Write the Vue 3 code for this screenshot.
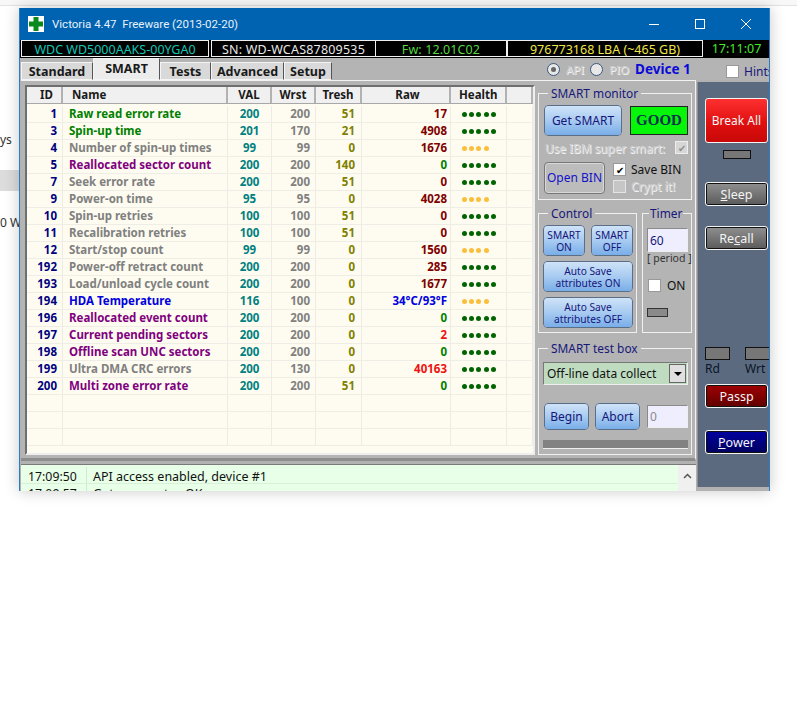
<script setup>
const rows = [
  [1,'Raw read error rate','g',200,200,51,'17','m',1],
  [3,'Spin-up time','g',201,170,21,'4908','m',1],
  [4,'Number of spin-up times','x',99,99,0,'1676','m',0],
  [5,'Reallocated sector count','p',200,200,140,'0','g',1],
  [7,'Seek error rate','x',200,200,51,'0','m',1],
  [9,'Power-on time','x',95,95,0,'4028','m',0],
  [10,'Spin-up retries','x',100,100,51,'0','m',1],
  [11,'Recalibration retries','x',100,100,51,'0','m',1],
  [12,'Start/stop count','x',99,99,0,'1560','m',0],
  [192,'Power-off retract count','x',200,200,0,'285','m',1],
  [193,'Load/unload cycle count','x',200,200,0,'1677','m',1],
  [194,'HDA Temperature','b',116,100,0,'34°C/93°F','b',0],
  [196,'Reallocated event count','p',200,200,0,'0','g',1],
  [197,'Current pending sectors','p',200,200,0,'2','r',1],
  [198,'Offline scan UNC sectors','p',200,200,0,'0','g',1],
  [199,'Ultra DMA CRC errors','x',200,130,0,'40163','r',1],
  [200,'Multi zone error rate','p',200,200,51,'0','g',1]
]
const blanks = [1,2,3]
</script>

<template>
  <div class="desk">
    <div class="topstrip"></div>
    <div class="behind">
      <span class="b1">ys</span>
      <span class="b2"></span>
      <span class="b3">0 W</span>
    </div>
    <div class="win">
      <div class="title">
        <svg class="logo" width="16" height="16" viewBox="0 0 16 16"><rect width="16" height="16" fill="#fff"/><path d="M5.500 1h5v4.500h4.500v5h-4.500v4.500h-5v-4.500h-4.500v-5h4.500z" fill="#0a8a1e"/></svg>
        <span class="ttext">Victoria 4.47&nbsp; Freeware (2013-02-20)</span>
        <div class="caps">
          <svg width="12" height="12" viewBox="0 0 12 12"><path d="M1 6.500h10" stroke="#fff" fill="none"/></svg>
          <svg width="12" height="12" viewBox="0 0 12 12"><rect x="1.500" y="1.500" width="9" height="9" stroke="#fff" fill="none"/></svg>
          <svg width="12" height="12" viewBox="0 0 12 12"><path d="M1 1l10 10M11 1l-10 10" stroke="#fff" fill="none"/></svg>
        </div>
      </div>
      <div class="info">
        <div class="cell c1">WDC WD5000AAKS-00YGA0</div>
        <div class="cell c2">SN: WD-WCAS87809535</div>
        <div class="cell c3">Fw: 12.01C02</div>
        <div class="cell c4">976773168 LBA (~465 GB)</div>
        <div class="clock">17:11:07</div>
      </div>
      <div class="tabrow">
        <div class="tabs">
          <span class="tab t1">Standard</span>
          <span class="tab on">SMART</span>
          <span class="tab t3">Tests</span>
          <span class="tab t4">Advanced</span>
          <span class="tab t5">Setup</span>
        </div>
        <div class="apirow">
          <span class="radio sel"></span><span class="dis api">API</span>
          <span class="radio"></span><span class="dis pio">PIO</span>
          <span class="dev">Device 1</span>
        </div>
        <div class="hints"><span class="box white"></span><span>Hints</span></div>
      </div>
      <div class="work">
        <div class="main">
          <div class="panel">
            <div class="grid">
              <div class="row head">
                <span class="id">ID</span><span class="name">Name</span><span class="num">VAL</span><span class="num">Wrst</span><span class="num">Tresh</span><span class="raw">Raw</span><span class="health">Health</span><span class="rest"></span>
              </div>
              <div v-for="r in rows" :key="r[0]" class="row">
                <span class="id">{{ r[0] }}</span>
                <span class="name" :class="r[2]">{{ r[1] }}</span>
                <span class="num val">{{ r[3] }}</span>
                <span class="num wrst">{{ r[4] }}</span>
                <span class="num tresh">{{ r[5] }}</span>
                <span class="raw" :class="r[7]">{{ r[6] }}</span>
                <span class="health dots" :class="r[8] ? 'hg' : 'hy'"><i v-for="d in (r[8] ? 5 : 4)" :key="d"></i></span>
                <span class="rest"></span>
              </div>
              <div v-for="b in blanks" :key="b" class="row">
                <span class="id"></span><span class="name"></span><span class="num"></span><span class="num"></span><span class="num"></span><span class="raw"></span><span class="health"></span><span class="rest"></span>
              </div>
            </div>
            <div class="side">
              <fieldset class="grp mon">
                <legend>SMART monitor</legend>
                <div class="mrow">
                  <button class="btn blue gs">Get SMART</button>
                  <div class="good">GOOD</div>
                </div>
                <div class="ibm"><span class="dis">Use IBM super smart:</span><span class="box chkdis">✔</span></div>
                <div class="mrow2">
                  <button class="btn grey ob">Open BIN</button>
                  <div class="checks">
                    <div class="ck"><span class="box white">✔</span>Save BIN</div>
                    <div class="ck"><span class="box off"></span><span class="dis">Crypt it!</span></div>
                  </div>
                </div>
              </fieldset>
              <div class="pair">
                <fieldset class="grp ctl">
                  <legend>Control</legend>
                  <div class="two">
                    <button class="btn blue sm">SMART<br>ON</button>
                    <button class="btn blue sm">SMART<br>OFF</button>
                  </div>
                  <button class="btn blue wide">Auto Save<br>attributes ON</button>
                  <button class="btn blue wide">Auto Save<br>attributes OFF</button>
                </fieldset>
                <fieldset class="grp tim">
                  <legend>Timer</legend>
                  <div class="input t60">60</div>
                  <div class="period">[ period ]</div>
                  <div class="onrow"><span class="box white"></span>ON</div>
                  <div class="led"></div>
                </fieldset>
              </div>
              <fieldset class="grp test">
                <legend>SMART test box</legend>
                <div class="combo"><span>Off-line data collect</span><i><b></b></i></div>
                <div class="trow">
                  <button class="btn blue tb">Begin</button>
                  <button class="btn blue tb ab">Abort</button>
                  <div class="input zero">0</div>
                </div>
                <div class="prog"></div>
              </fieldset>
            </div>
          </div>
          <div class="log">
            <div class="lines">
              <div class="line"><span class="lt">17:09:50</span><span>API access enabled, device #1</span></div>
              <div class="line l2"><span class="lt">17:09:57</span><span>Get passport ... OK</span></div>
            </div>
            <div class="sb"><svg width="9" height="6" viewBox="0 0 9 6"><path d="M1 5l3.500-3.500 3.500 3.500" stroke="#555" stroke-width="1.500" fill="none"/></svg></div>
          </div>
        </div>
        <div class="rail">
          <button class="rbtn red">Break All</button>
          <div class="rled"></div>
          <button class="rbtn dark sl"><u>S</u>leep</button>
          <button class="rbtn dark rc">Re<u>c</u>all</button>
          <div class="rw">
            <div class="rwc"><i></i><span>Rd</span></div>
            <div class="rwc"><i></i><span>Wrt</span></div>
          </div>
          <button class="rbtn pass">Passp</button>
          <button class="rbtn pow"><u>P</u>ower</button>
        </div>
      </div>
    </div>
  </div>
</template>

<style>
html, body { margin: 0; background: #fff; }
</style>

<style scoped>
.desk { position: relative; width: 797px; height: 707px; overflow: hidden; background: #fff; font-family: "Noto Sans", "Open Sans", sans-serif; font-size: 12px; color: #111; }
.topstrip { height: 5px; background: #f8f8f8; border-bottom: 1px solid #e2e2e2; }
.behind { position: absolute; left: 0; top: 0; width: 19px; height: 300px; font-size: 12px; color: #333; }
.b1 { position: absolute; left: 0; top: 131px; }
.b2 { position: absolute; left: 0; top: 170px; width: 19px; height: 21px; background: #dcdcdc; }
.b3 { position: absolute; left: 0; top: 214px; white-space: nowrap; }
.win { position: absolute; left: 19px; top: 8px; width: 751px; height: 483px; box-sizing: border-box; border-left: 1px solid #2b7cc4; border-right: 1px solid #2b7cc4; overflow: hidden; background: #b2b2b2; display: flex; flex-direction: column; box-shadow: 0 0 14px rgba(0,0,0,.22); }
.title { height: 32px; flex: none; background: #0063b1; color: #e8f1fa; display: flex; align-items: center; padding: 0 0 0 8px; font-family: Roboto, sans-serif; font-size: 11.500px; }
.logo { margin-right: 8px; }
.caps { margin-left: auto; display: flex; gap: 34px; padding-right: 17px; }
.info { height: 18px; flex: none; background: #000; display: flex; align-items: stretch; font-size: 12.500px; padding-left: 1px; }
.cell { border: 1px solid #f0f0f0; display: flex; align-items: center; justify-content: center; box-sizing: border-box; height: 17px; padding-top: 1px; flex: none; }
.c1 { width: 188px; color: #12c6b4; margin-right: 2px; }
.c2 { width: 165px; color: #e8e8e8; letter-spacing: .2px; }
.c3 { width: 131px; color: #56d840; border-left: 0; letter-spacing: .1px; }
.c4 { width: 196px; color: #f1e649; }
.clock { width: 67px; flex: none; color: #46e82e; text-align: center; line-height: 18px; }
.tabrow { height: 22px; flex: none; display: flex; align-items: flex-start; position: relative; background: #b4b4b4; }
.tabs { display: flex; align-items: flex-end; height: 22px; padding-left: 1px; font-weight: 700; font-size: 12.500px; }
.tab { box-sizing: border-box; height: 18px; background: #d9d9d9; border: 1px solid #f4f4f4; border-right-color: #555; display: flex; align-items: center; justify-content: center; color: #1a1a1a; }
.t1 { width: 72px; }
.tab.on { width: 67px; height: 22px; background: #ececec; padding-bottom: 2px; position: relative; }
.t3 { width: 51px; }
.t4 { width: 73px; }
.t5 { width: 48px; }
.apirow { position: absolute; left: 527px; top: 3px; display: flex; align-items: center; height: 16px; }
.radio { width: 13px; height: 13px; border-radius: 50%; box-sizing: border-box; background: #e8e8e8; border: 1px solid #39577f; position: relative; }
.radio.sel::after { content: ""; position: absolute; left: 3px; top: 3px; width: 5px; height: 5px; border-radius: 50%; background: #666; }
.dis { color: #cfcfcf; text-shadow: 1px 1px 0 #f2f2f2; }
.api { margin: 0 6px 0 6px; font-size: 11.500px; }
.pio { margin: 0 6px 0 6px; font-size: 11.500px; }
.dev { color: #0b0bd8; font-weight: 700; font-size: 13.500px; }
.hints { position: absolute; left: 706px; top: 5px; display: flex; align-items: center; gap: 5px; color: #17177a; white-space: nowrap; }
.box { width: 13px; height: 13px; box-sizing: border-box; display: inline-flex; align-items: center; justify-content: center; font-size: 10px; line-height: 1; flex: none; border: 1px solid #999; }
.box.white { background: #fff; color: #000; }
.box.off { background: #c6c6c6; border-color: #e4e4e4; }
.chkdis { background: #d6d6d6; color: #909090; border-color: #eee; margin-left: auto; }
.work { flex: 1; min-height: 0; display: flex; }
.main { width: 677px; flex: none; display: flex; flex-direction: column; padding-left: 1px; box-sizing: border-box; }
.panel { height: 381px; flex: none; box-sizing: border-box; display: flex; padding: 4px 0 0 4px; border-top: 1px solid #f2f2f2; border-right: 1px solid #f2f2f2; margin-right: 1px; border-bottom: 3px solid #8d8d8d; gap: 3px; background: #b4b4b4; }
.grid { width: 510px; height: 370px; overflow: hidden; flex: none; box-sizing: border-box; border: 2px solid #6f6f6f; border-right-color: #eee; border-bottom-color: #eee; background: #fefcf0; font-weight: 700; font-size: 11.500px; }
.row { display: grid; grid-template-columns: 36px 165px 44px 44px 46px 89px 56px 1fr; height: 17px; border-bottom: 1px solid #eeeee6; line-height: 16px; box-sizing: border-box; }
.row > span { border-right: 1px solid #ecece4; box-sizing: border-box; white-space: nowrap; overflow: hidden; }
.row.head { height: 17px; margin-bottom: 2px; background: #f0f0f0; color: #1a1a1a; border-bottom: 1px solid #a8a8a8; line-height: 16px; }
.row.head > span { border-right: 2px solid #b2b2b2; }
.row.head .num { text-align: center; padding: 0; }
.row.head .id { text-align: center; padding: 0 0 0 5px; color: #1a1a1a; }
.row.head .name { padding-left: 9px; color: #1a1a1a; }
.row.head .raw { text-align: center; padding: 0 0 0 4px; }
.row.head .health { text-align: left; padding: 0 0 0 8px; color: #1a1a1a; }
.id { text-align: right; padding-right: 5px; color: #000080; }
.name { padding-left: 6px; }
.num { text-align: right; padding-right: 5px; }
.num.val { color: #008080; text-align: center; padding: 0; }
.wrst { color: #808080; }
.tresh { color: #808000; padding-right: 6px; }
.raw { text-align: right; padding-right: 3px; }
.m { color: #800000; }
.g { color: #008000; }
.x { color: #808080; }
.p { color: #800080; }
.b { color: #0000e0; }
.r { color: #f01010; }
.health { padding-left: 11px; }
.dots { display: flex; align-items: center; gap: 2.200px; }
.dots i { width: 5px; height: 5px; border-radius: 50%; background: currentColor; display: block; flex: none; }
.hg { color: #006400; }
.hy { color: #fbbf3c; }
.side { width: 154px; flex: none; display: flex; flex-direction: column; }
.grp { margin: 0; padding: 0 3px 0 5px; box-sizing: border-box; border: 1px solid #f0f0f0; min-width: 0; }
.grp legend { color: #17177a; font-size: 11.900px; padding: 0 3px; margin-left: 5px; line-height: 16px; }
.mon legend { margin-left: 4px; }
.mon { height: 115px; flex: none; }
.btn { font-family: inherit; font-size: 12px; border-radius: 4px; padding: 0; box-sizing: border-box; cursor: default; line-height: 12px; }
.blue { background: linear-gradient(#cfe3f8, #a8cbf1 50%, #79aee8); border: 1px solid #f0f6ff; outline: 1px solid #5a6e88; outline-offset: -1px; color: #15157a; }
.grey { background: #bcbcbc; border: 1px solid #777; color: #1212c8; box-shadow: inset 0 0 0 1px #d8d8d8; }
.mrow { display: flex; justify-content: space-between; align-items: flex-start; margin-top: 4px; height: 32px; }
.gs { width: 78px; height: 31px; }
.good { width: 58px; height: 29px; margin-top: 1px; box-sizing: border-box; border: 1px solid #222; background: #06f509; color: #0a3050; font-family: "Liberation Serif", serif; font-weight: 700; font-size: 15px; display: flex; align-items: center; justify-content: center; }
.ibm { display: flex; align-items: center; margin-top: 3px; height: 15px; white-space: nowrap; font-size: 11.800px; padding-left: 1px; }
.mrow2 { display: flex; align-items: center; gap: 8px; margin-top: 7px; }
.ob { width: 61px; height: 32px; }
.checks { display: flex; flex-direction: column; gap: 3px; }
.ck { display: flex; align-items: center; gap: 5px; height: 14px; }
.pair { display: flex; justify-content: space-between; height: 133px; flex: none; }
.ctl { width: 99px; height: 128px; margin-top: 5px; padding: 0 3px 0 4px; display: flex; flex-direction: column; gap: 5px; }
.tim { width: 50px; height: 128px; margin-top: 5px; padding: 0 2px 0 4px; }
.grp.tim legend { margin-left: 2px; padding: 0 1px; }
.two { display: flex; justify-content: space-between; margin-top: 4px; }
.sm { width: 42px; height: 31px; font-size: 10.200px; }
.wide { width: 90px; height: 31px; font-size: 10.200px; }
.input { background: #eeeeff; border: 1px solid #8a8a8a; border-right-color: #eee; border-bottom-color: #eee; box-sizing: border-box; color: #15157a; padding-left: 2px; display: flex; align-items: center; }
.t60 { width: 41px; height: 24px; margin-top: 7px; }
.period { color: #333; font-size: 10.500px; line-height: 13px; white-space: nowrap; }
.onrow { display: flex; align-items: center; gap: 6px; margin-top: 13px; height: 14px; padding-left: 1px; color: #111; }
.led { width: 21px; height: 9px; background: #8a8a8a; border: 1px solid #333; margin-top: 16px; box-sizing: border-box; }
.test { height: 115px; flex: none; margin-top: 7px; padding: 0 3px 0 4px; }
.combo { height: 23px; margin-top: 6px; background: #bfdcc1; border: 1px solid #777; border-right-color: #eee; border-bottom-color: #eee; box-sizing: border-box; display: flex; align-items: center; padding: 0 1px 0 3px; white-space: nowrap; justify-content: space-between; }
.combo i { width: 17px; height: 19px; background: #e0e0e0; border: 1px solid #666; box-sizing: border-box; display: flex; align-items: center; justify-content: center; }
.combo b { width: 0; height: 0; border: 4px solid transparent; border-top: 4px solid #000; border-bottom: 0; }
.trow { display: flex; align-items: center; margin: 18px 0 0 1px; gap: 6px; height: 27px; }
.tb { width: 45px; height: 27px; }
.ab { margin-right: 1px; }
.zero { width: 41px; height: 23px; color: #8a8a8a; }
.prog { height: 9px; margin-top: 10px; background: #828282; border-bottom: 1px solid #eee; box-sizing: border-box; }
.log { flex: 1; min-height: 0; display: flex; margin: 3px 1px 0 0; background: #e8ffe8; overflow: hidden; border-top: 1px solid #7a7a7a; }
.lines { flex: 1; padding-top: 2px; }
.line { height: 17px; display: flex; border-bottom: 1px solid #d8efd8; line-height: 20px; box-sizing: border-box; font-size: 12.500px; }
.lt { width: 66px; padding-left: 7px; box-sizing: border-box; border-right: 1px solid #d0e8d0; margin-right: 6px; font-size: 12.300px; }
.sb { width: 18px; background: #f0f0f0; display: flex; justify-content: center; padding-top: 8px; box-sizing: border-box; }
.rail { flex: 1; background: #5b6a7e; margin: 2px 0 4px; display: flex; flex-direction: column; align-items: stretch; padding: 16px 0 0 7px; border-left: 1px solid #8f8f8f; box-sizing: border-box; }
.rbtn { height: 24px; font-family: inherit; font-size: 12.500px; border-radius: 3px; border: 1px solid #f4f4f4; color: #f4f4f4; padding: 0; box-sizing: border-box; box-shadow: 0 0 0 1px #111 inset; width: 63px; flex: none; }
.red { height: 45px; background: linear-gradient(#ff3030, #e01010 55%, #c80808); font-size: 12px; box-shadow: none; }
.rled { width: 28px; height: 9px; background: #777; border: 1px solid #111; margin: 7px 0 0 18px; box-sizing: border-box; flex: none; }
.dark { background: linear-gradient(#909090, #5a5a5a); }
.sl { margin-top: 23px; }
.rc { margin-top: 20px; }
.rw { display: flex; gap: 15px; margin-top: 97px; height: 32px; flex: none; }
.rwc { display: flex; flex-direction: column; flex: none; width: 25px; color: #0a1428; white-space: nowrap; line-height: 15px; }
.rwc i { display: block; width: 25px; height: 13px; background: #777; border: 1px solid #111; box-sizing: border-box; margin-bottom: 1px; }
.pass { background: linear-gradient(#a00000, #600000); margin-top: 5px; }
.pow { background: linear-gradient(#0000a0, #000060); margin-top: 22px; }
</style>
